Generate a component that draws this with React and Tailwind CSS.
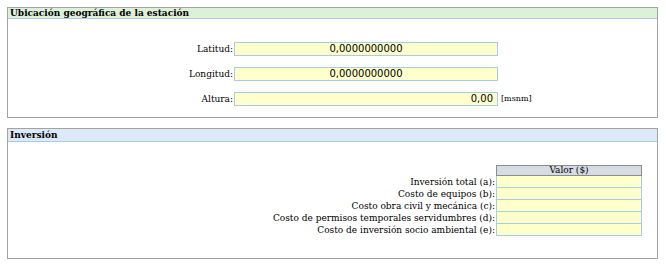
export default function App() {
  const rows = [
    'Inversión total (a):',
    'Costo de equipos (b):',
    'Costo obra civil y mecánica (c):',
    'Costo de permisos temporales servidumbres (d):',
    'Costo de inversión socio ambiental (e):',
  ]

  return (
    <div className="w-[666px] h-[270px] bg-white pt-[7px] pl-[7px] text-black font-[DejaVu_Serif,serif]">
      {/* Ubicación */}
      <div className="w-[651px] h-[111px] border border-[#a3a3a3]">
        <div className="h-[11px] bg-[#ddf0d9] border-b border-[#a9cbe6] pl-[2px] text-[9px] leading-[10px] font-bold">
          Ubicación geográfica de la estación
        </div>
        <div className="mt-[23px] flex flex-col gap-[11px]">
          <Coord label="Latitud:" value="0,0000000000" center />
          <Coord label="Longitud:" value="0,0000000000" center />
          <Coord label="Altura:" value="0,00" unit="[msnm]" />
        </div>
      </div>

      {/* Inversión */}
      <div className="mt-[10px] w-[651px] h-[131px] border border-[#a3a3a3]">
        <div className="h-[13px] bg-[#dde9f6] border-b border-[#a9cbe6] pl-[2px] text-[9px] leading-[12px] font-bold">
          Inversión
        </div>
        <div className="mt-[23px] flex">
          <div className="w-[488px] pt-[11px] flex flex-col items-end pr-[1px] text-[9px] leading-[12px]">
            {rows.map((r) => (
              <div key={r} className="h-[12px]">{r}</div>
            ))}
          </div>
          <div className="w-[146px]">
            <div className="h-[11px] bg-[#d6dce4] border border-[#8c8c8c] text-center text-[9px] leading-[9px]">
              Valor ($)
            </div>
            {rows.map((r) => (
              <div key={r} className="h-[12px] bg-[#ffffcc] border-x border-b border-[#a9cbe6]" />
            ))}
          </div>
        </div>
      </div>
    </div>
  )
}

function Coord({ label, value, unit, center }) {
  return (
    <div className="flex items-center h-[14px]">
      <div className="w-[226px] pr-[1px] text-right text-[9px] leading-[14px]">{label}</div>
      <div
        className={`w-[264px] h-[14px] bg-[#ffffcc] border border-[#a9cbe6] font-[DejaVu_Sans,sans-serif] text-[10px] leading-[12px] ${center ? 'text-center' : 'text-right pr-[4px]'}`}
      >
        {value}
      </div>
      {unit && <div className="pl-[3px] text-[8px] leading-[14px]">{unit}</div>}
    </div>
  )
}
